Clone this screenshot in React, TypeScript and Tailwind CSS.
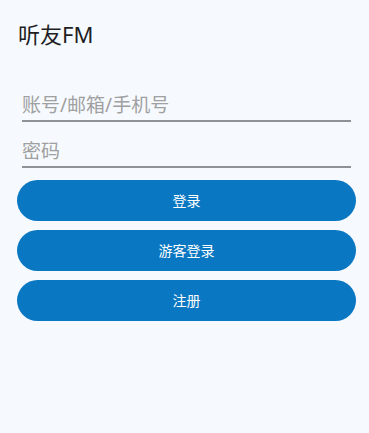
import React from "react"

const font = { fontFamily: '"Noto Sans", "Noto Sans CJK SC", sans-serif' }

export default function App() {
  return (
    <div className="h-[433px] w-full bg-[#f6faff] pl-[17px] pr-[13px] pt-[19px]" style={font}>
      <h1 className="text-[22px] leading-[30px] text-[#1f1f1f] pl-[1px]">听友FM</h1>

      <div className="mt-[43px] ml-[5px] mr-[5px] flex flex-col">
        <input
          className="h-[30px] w-full bg-transparent text-[19px] text-[#333] placeholder-[#a0a0a0] outline-none border-b-2 border-[#8e9296] pb-[2px]"
          placeholder="账号/邮箱/手机号"
        />
        <input
          type="password"
          className="mt-[16px] h-[30px] w-full bg-transparent text-[19px] text-[#333] placeholder-[#a0a0a0] outline-none border-b-2 border-[#8e9296] pb-[2px]"
          placeholder="密码"
        />
      </div>

      <div className="mt-[12px] flex flex-col gap-[9px]">
        <button className="h-[41px] w-full rounded-full bg-[#0a77c2] text-[14px] text-white">登录</button>
        <button className="h-[41px] w-full rounded-full bg-[#0a77c2] text-[14px] text-white">游客登录</button>
        <button className="h-[41px] w-full rounded-full bg-[#0a77c2] text-[14px] text-white">注册</button>
      </div>
    </div>
  )
}
